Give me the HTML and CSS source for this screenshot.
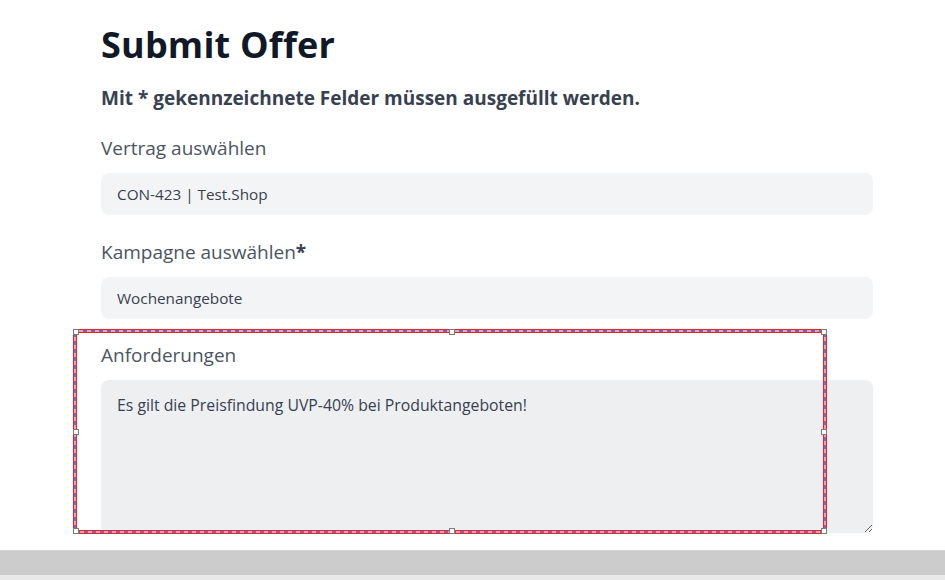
FILE: index.html
```html
<!DOCTYPE html>
<html lang="de">
<head>
<meta charset="utf-8">
<title>Submit Offer</title>
<link rel="stylesheet" href="styles.css">
</head>
<body>
<main class="page">
  <h1 class="title">Submit Offer</h1>
  <p class="hint">Mit * gekennzeichnete Felder müssen ausgefüllt werden.</p>
  <div class="field field-first">
    <label class="label">Vertrag auswählen</label>
    <div class="input">CON-423 | Test.Shop</div>
  </div>
  <div class="field">
    <label class="label">Kampagne auswählen<b>*</b></label>
    <div class="input">Wochenangebote</div>
  </div>
  <div class="field field-last">
    <label class="label">Anforderungen</label>
    <textarea class="textarea">Es gilt die Preisfindung UVP-40% bei Produktangeboten!</textarea>
  </div>
  <div class="selection">
    <svg class="sel-svg" width="754" height="205" viewBox="0 0 754 205">
      <rect x="2" y="2" width="750" height="201" fill="none" stroke="#e8232e" stroke-width="4"/>
      <rect x="2" y="2" width="750" height="201" fill="none" stroke="#f9d0d2" stroke-width="1.4"/>
      <rect x="2" y="2" width="750" height="201" fill="none" stroke="#3a5fc8" stroke-width="1.4" stroke-dasharray="4 4"/>
    </svg>
    <span class="handle h-tl"></span>
    <span class="handle h-tm"></span>
    <span class="handle h-tr"></span>
    <span class="handle h-ml"></span>
    <span class="handle h-mr"></span>
    <span class="handle h-bl"></span>
    <span class="handle h-bm"></span>
    <span class="handle h-br"></span>
  </div>
</main>
<footer class="bar"></footer>
<div class="strip"></div>
</body>
</html>
```
FILE: styles.css
```css
html, body {
  margin: 0;
  padding: 0;
  background: #ffffff;
}
body {
  font-family: "Open Sans", "Noto Sans", sans-serif;
  width: 945px;
  height: 580px;
  overflow: hidden;
}
.page {
  position: relative;
  padding: 20px 72px 0 101px;
  height: 550px;
  box-sizing: border-box;
}
.title {
  margin: 0;
  font-size: 36px;
  line-height: 50px;
  font-weight: 700;
  color: #111827;
  letter-spacing: 0.2px;
}
.hint {
  margin: 14px 0 0 0;
  font-size: 19px;
  line-height: 28px;
  font-weight: 700;
  color: #374151;
}
.field {
  display: flex;
  flex-direction: column;
  gap: 11px;
  margin-top: 23px;
}
.field-first,
.field-last {
  margin-top: 22px;
}
.label {
  font-size: 19px;
  line-height: 28px;
  color: #4b5563;
}
.label b {
  font-weight: 700;
  color: #374151;
}
.input {
  height: 42px;
  box-sizing: border-box;
  padding: 0 16px;
  display: flex;
  align-items: center;
  background: #f3f4f6;
  border-radius: 8px;
  font-size: 15.3px;
  color: #374151;
}
.textarea {
  height: 153px;
  box-sizing: border-box;
  padding: 14px 16px;
  background: #eeeff1;
  border: none;
  border-radius: 8px;
  font-family: "Open Sans", "Noto Sans", sans-serif;
  font-size: 15.8px;
  line-height: 22px;
  color: #374151;
  resize: vertical;
  outline: none;
}
.selection {
  position: absolute;
  left: 73px;
  top: 329px;
  width: 754px;
  height: 205px;
}
.sel-svg {
  display: block;
}
.handle {
  position: absolute;
  width: 4px;
  height: 4px;
  background: #ffffff;
  border: 1px solid #7a7a7a;
}
.h-tl { left: 0; top: 0; }
.h-tm { left: 376px; top: 0; }
.h-tr { right: 0; top: 0; }
.h-ml { left: 0; top: 100px; }
.h-mr { right: 0; top: 100px; }
.h-bl { left: 0; bottom: 0; }
.h-bm { left: 376px; bottom: 0; }
.h-br { right: 0; bottom: 0; }
.bar {
  height: 25px;
  background: #cccccc;
  border-top: 1px solid #d6d6d6;
  box-sizing: border-box;
}
.strip {
  height: 5px;
  background: #e9e9e9;
}
```
